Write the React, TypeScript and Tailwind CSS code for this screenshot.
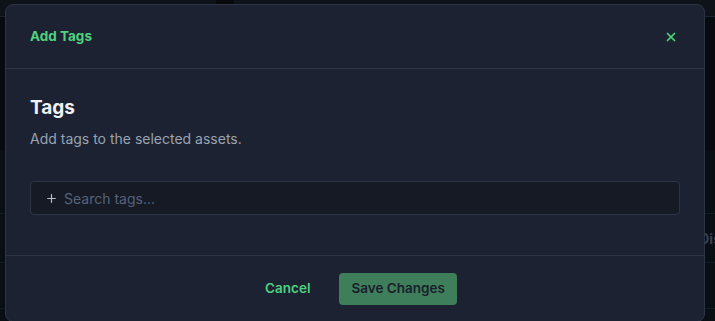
import { X, Plus } from "lucide-react";

function Backdrop() {
  return (
    <div className="absolute inset-0 flex flex-col bg-[#080b10]">
      {/* top bar */}
      <div className="h-[17px] flex bg-[#0e1219] border-b border-[#1c2431]">
        <div className="w-[216px]" />
        <div className="w-[18px] bg-[#07090d]" />
        <div className="flex-1" />
      </div>
      <div className="h-[133px]" />
      <div className="h-[64px] bg-[#0b0f16] border-b border-[#161c27]" />
      <div className="h-[49px] bg-[#0b0f16] border-b border-[#161c27] flex items-center justify-end overflow-hidden">
        <span className="text-[14px] font-bold text-[#3b4453] -mr-[6px] font-['Inter',sans-serif]">Dis</span>
      </div>
      <div className="h-[46px] bg-[#0b0f16] border-b border-[#161c27]" />
      <div className="flex-1 bg-[#0b0f16]" />
    </div>
  );
}

export default function App() {
  return (
    <div className="relative w-[715px] h-[321px] overflow-hidden font-['Inter','Noto_Sans',sans-serif]">
      <Backdrop />

      {/* dialog */}
      <div className="absolute left-[5px] top-[4px] w-[700px] h-[318px] flex flex-col rounded-[8px] border border-[#2c3546] bg-[#1c2231] shadow-xl">
        {/* header */}
        <div className="h-[64px] flex items-center justify-between pl-[24px] pr-[26px] border-b border-[#2c3546]">
          <h2 className="text-[13.5px] font-bold text-[#4fd17f]">Add Tags</h2>
          <button className="text-[#4fd17f]">
            <X size={14} strokeWidth={3} />
          </button>
        </div>

        {/* body */}
        <div className="h-[187px] flex flex-col px-[24px] pt-[25px] border-b border-[#2c3546]">
          <h3 className="text-[19px] leading-[28px] font-bold text-[#eef1f5]">Tags</h3>
          <p className="mt-[7px] text-[14px] leading-[20px] text-[#9aa3b2]">Add tags to the selected assets.</p>
          <div className="mt-[32px] h-[34px] w-[650px] flex items-center gap-[6px] px-[14px] rounded-[4px] border border-[#2c3546] bg-[#151a25]">
            <Plus size={13} strokeWidth={2.2} className="text-[#b7bfcc]" />
            <span className="text-[14px] text-[#56637a]">Search tags...</span>
          </div>
        </div>

        {/* footer */}
        <div className="flex-1 flex items-center justify-center gap-[17px]">
          <button className="px-[12px] h-[32px] text-[13.5px] font-semibold text-[#4fd17f]">Cancel</button>
          <button className="h-[32px] px-[12px] rounded-[4px] bg-[#3f7e5b] text-[13.5px] font-semibold text-[#18202c]">
            Save Changes
          </button>
        </div>
      </div>
    </div>
  );
}
